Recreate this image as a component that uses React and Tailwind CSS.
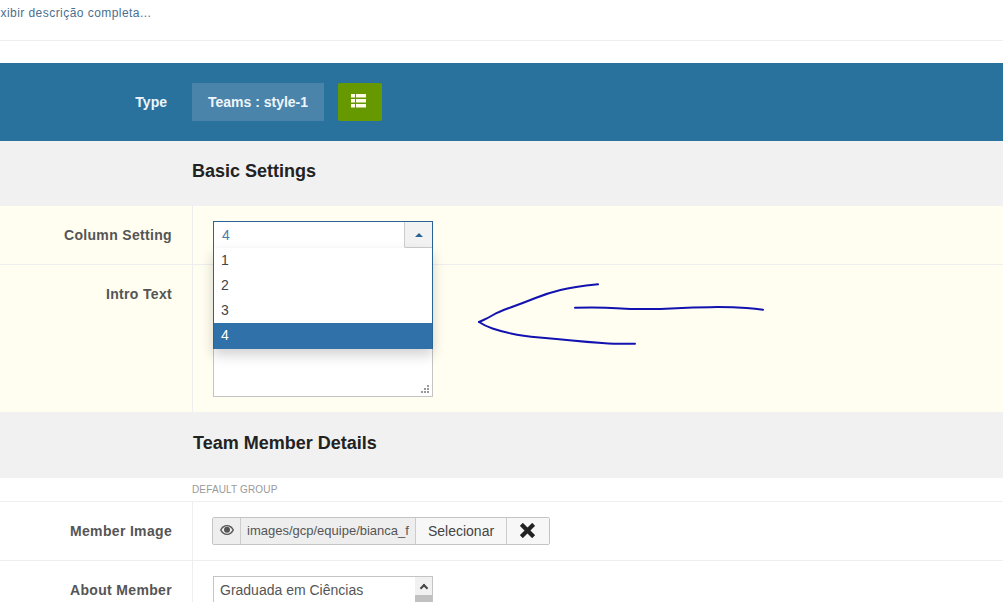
const font = { fontFamily: '"Liberation Sans", Arial, sans-serif' }

function EyeIcon() {
  return (
    <svg width="14" height="10" viewBox="0 0 14 10">
      <path d="M7 0C4 0 1.500 1.800 0 5c1.500 3.200 4 5 7 5s5.500-1.800 7-5C12.500 1.800 10 0 7 0z" fill="#555" />
      <path d="M7 1.200C4.800 1.200 2.800 2.600 1.500 5 2.800 7.400 4.800 8.800 7 8.800S11.200 7.400 12.500 5C11.200 2.600 9.200 1.200 7 1.200z" fill="#eeeeee" />
      <circle cx="7" cy="4.800" r="3" fill="#555" />
    </svg>
  )
}

function ListIcon() {
  return (
    <svg width="15" height="14" viewBox="0 0 15 14" fill="#fffde8">
      <rect x="0" y="0" width="4" height="3.500" />
      <rect x="5" y="0" width="10" height="3.500" />
      <rect x="0" y="5" width="4" height="3.500" />
      <rect x="5" y="5" width="10" height="3.500" />
      <rect x="0" y="10" width="4" height="3.500" />
      <rect x="5" y="10" width="10" height="3.500" />
    </svg>
  )
}

function TimesIcon() {
  return (
    <svg width="15" height="15" viewBox="0 0 15 15" stroke="#222" strokeWidth="4.200" strokeLinecap="square">
      <path d="M2.800 2.800L12.200 12.200M12.200 2.800L2.800 12.200" />
    </svg>
  )
}

function SectionTitle({ title, className }) {
  return (
    <div className={`flex items-center bg-[#f1f1f1] text-[18px] font-bold text-[#222] ${className}`}>
      {title}
    </div>
  )
}

function RowLabel({ children }) {
  return (
    <div className="w-[193px] shrink-0 border-r border-[#eeeeee] pr-5 pt-[19px] text-right text-[14px] font-bold tracking-[0.33px] text-[#555]">
      {children}
    </div>
  )
}

function ColumnSelect() {
  return (
    <div className="relative z-10 h-[28px] w-[220px]">
      <div className="flex h-[27px] items-center justify-between border-x border-t border-[#2a6496] bg-white">
        <span className="pl-[8px] pt-[1px] text-[14px] text-[#4a7aa8]">4</span>
        <span className="flex h-full w-[28px] items-center justify-center rounded-bl-[2px] border-b border-l border-[#cccccc] bg-[#f2f2f2]">
          <span className="h-0 w-0 border-x-[4px] border-b-[4px] border-x-transparent border-b-[#2a6496]" />
        </span>
      </div>
      <ul className="absolute left-0 top-[27px] w-[220px] border-x border-[#2a6496] bg-white text-[14px] text-[#444] shadow-[0_6px_12px_rgba(0,0,0,0.18)]">
        {['1', '2', '3'].map((item) => (
          <li key={item} className="flex h-[25px] items-center pl-[7px]">{item}</li>
        ))}
        <li className="flex h-[26px] items-center bg-[#3071a9] pb-[2px] pl-[7px] text-white">4</li>
      </ul>
    </div>
  )
}

const arrowHead = [[598, 284.3], [573, 287], [548, 293], [523, 303], [498, 312], [488, 318], [479, 322]]
const arrowTail = [[479, 322], [485, 326], [500, 331], [522, 336], [557, 339], [587, 342], [617, 344], [635, 343.7]]
const arrowShaft = [[575, 307.7], [603, 307.3], [630, 309], [660, 309], [693, 307.3], [727, 307], [747, 308], [763, 309.7]]

// quadratic curves through the midpoints, so the hand drawn line stays smooth
function smooth(points) {
  let d = `M${points[0][0]} ${points[0][1]}`
  for (let i = 1; i < points.length - 1; i++) {
    const midX = (points[i][0] + points[i + 1][0]) / 2
    const midY = (points[i][1] + points[i + 1][1]) / 2
    d += `Q${points[i][0]} ${points[i][1]} ${midX} ${midY}`
  }
  const last = points[points.length - 1]
  return `${d}L${last[0]} ${last[1]}`
}

function Arrow() {
  return (
    <svg className="absolute left-[470px] top-[275px]" width="300" height="80" viewBox="470 275 300 80" fill="none" stroke="#1212b0" strokeWidth="2" strokeLinecap="round" strokeLinejoin="round">
      <path d={smooth(arrowHead)} />
      <path d={smooth(arrowTail)} />
      <path d={smooth(arrowShaft)} />
    </svg>
  )
}

export default function App() {
  return (
    <div className="relative h-[602px] w-[1003px] overflow-hidden bg-white" style={font}>
      <div className="h-[41px] overflow-hidden border-b border-[#eeeeee] pt-[5px] text-[12px] leading-[16px] tracking-[0.45px] text-[#4a6f8f]">
        <span className="ml-[-8px] inline-block whitespace-nowrap">Exibir descrição completa...</span>
      </div>
      <div className="h-[22px]" />

      <div className="flex h-[78px] items-center bg-[#2a729e]">
        <div className="w-[192px] pr-[25px] text-right text-[14px] font-bold text-[#eef6fb]">Type</div>
        <div className="flex h-[38px] w-[132px] items-center justify-center bg-[#4a84ab] text-[14px] font-bold text-[#eef6fb]">
          Teams : style-1
        </div>
        <div className="ml-[14px] flex h-[38px] w-[44px] items-center justify-center rounded-[2px] bg-[#669900] pb-[3px] pr-[4px]">
          <ListIcon />
        </div>
      </div>

      <SectionTitle title="Basic Settings" className="h-[65px] pb-[5px] pl-[192px]" />

      <div className="flex h-[59px] border-b border-[#eeeeee] bg-[#fffef0]">
        <RowLabel>Column Setting</RowLabel>
        <div className="pl-[20px] pt-[15px]">
          <ColumnSelect />
        </div>
      </div>

      <div className="flex h-[147px] bg-[#fffef0]">
        <RowLabel>Intro Text</RowLabel>
        <div className="pl-[20px] pt-[15px]">
          <div className="relative h-[117px] w-[220px] border border-[#c4c4c4] bg-white">
            <svg className="absolute bottom-[2px] right-[2px]" width="9" height="9" viewBox="0 0 9 9" fill="#999">
              <rect x="6" y="0" width="2" height="2" />
              <rect x="3" y="3" width="2" height="2" />
              <rect x="6" y="3" width="2" height="2" />
              <rect x="0" y="6" width="2" height="2" />
              <rect x="3" y="6" width="2" height="2" />
              <rect x="6" y="6" width="2" height="2" />
            </svg>
          </div>
        </div>
      </div>

      <SectionTitle title="Team Member Details" className="h-[66px] pb-[4px] pl-[193px]" />

      <div className="h-[24px] border-b border-[#eeeeee] pl-[192px] pt-[6px] text-[10px] leading-[12px] tracking-[0.15px] text-[#999]">
        DEFAULT GROUP
      </div>

      <div className="flex h-[59px] border-b border-[#eeeeee]">
        <RowLabel>Member Image</RowLabel>
        <div className="pl-[19px] pt-[15px]">
          <div className="flex h-[28px] w-[338px] rounded-[2px] border border-[#c4c4c4] text-[#444]">
            <span className="flex w-[28px] items-center justify-center border-r border-[#cccccc] bg-[#eeeeee] pb-[2px]">
              <EyeIcon />
            </span>
            <span className="flex w-[174px] items-center overflow-hidden whitespace-nowrap bg-[#eeeeee] pl-[6px] text-[13px] text-[#555]">
              images/gcp/equipe/bianca_f
            </span>
            <span className="flex w-[92px] items-center justify-center border-x border-[#cccccc] bg-[#f7f7f7] text-[14px]">
              Selecionar
            </span>
            <span className="flex flex-1 items-center justify-center bg-[#f7f7f7] pb-[2px] pr-[2px]">
              <TimesIcon />
            </span>
          </div>
        </div>
      </div>

      <div className="flex h-[42px]">
        <RowLabel>About Member</RowLabel>
        <div className="pl-[20px] pt-[15px]">
          <div className="flex h-[40px] w-[220px] border border-[#c4c4c4] bg-white">
            <span className="flex-1 pl-[6px] pt-[5px] text-[14px] leading-[16px] text-[#555]">Graduada em Ciências</span>
            <span className="flex w-[17px] flex-col items-center bg-[#f1f1f1]">
              <span className="mt-[8px] h-[6px] w-[6px] rotate-45 border-l-2 border-t-2 border-[#444]" />
              <span className="mt-[4px] h-[20px] w-full bg-[#c1c1c1]" />
            </span>
          </div>
        </div>
      </div>

      <Arrow />
    </div>
  )
}
